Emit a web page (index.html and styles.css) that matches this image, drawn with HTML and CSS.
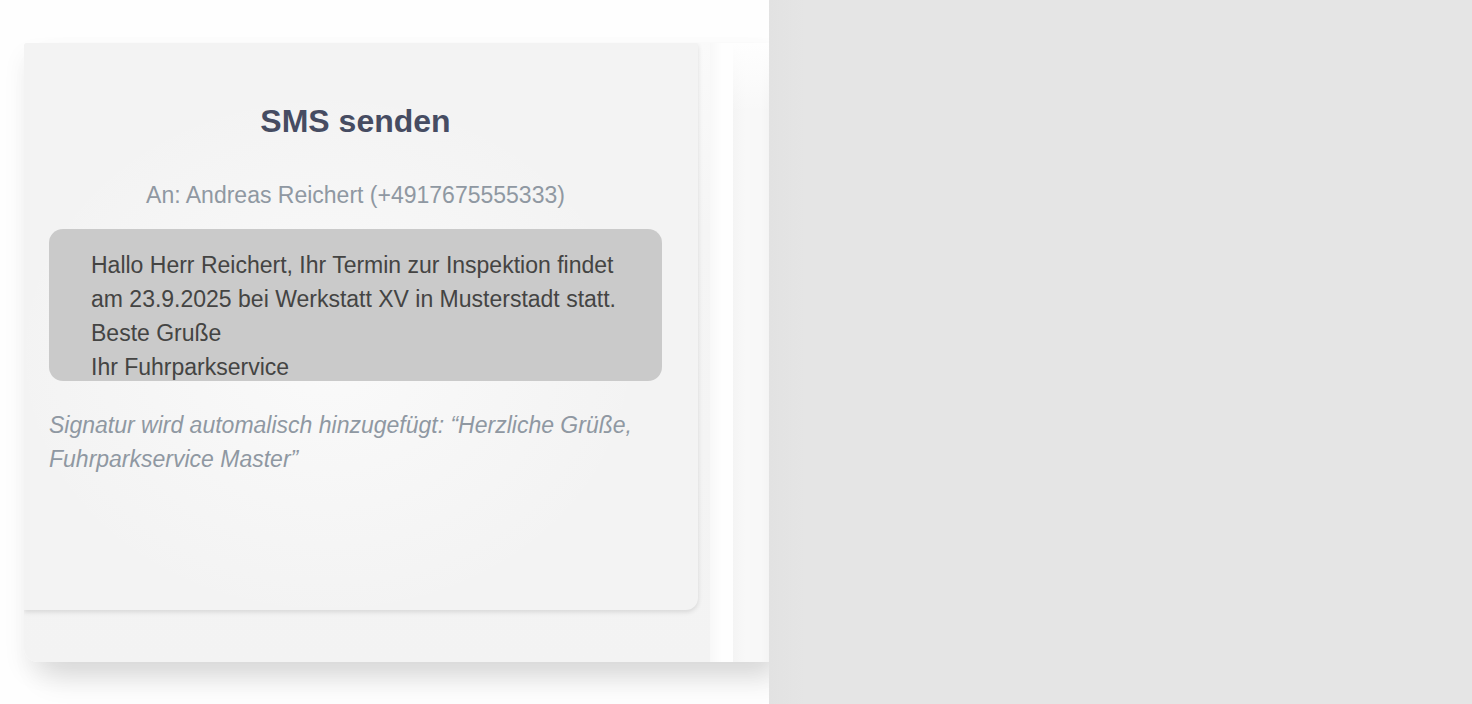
FILE: index.html
```html
<!DOCTYPE html>
<html lang="de">
<head>
<meta charset="utf-8">
<meta name="viewport" content="width=device-width, initial-scale=1">
<title>SMS senden</title>
<link rel="stylesheet" href="styles.css">
</head>
<body>
<div class="layout">
  <main class="stage">
    <div class="panel">
      <div class="content">
        <form class="card">
          <h1 class="title">SMS senden</h1>
          <label class="recipient" for="message">An: Andreas Reichert (+4917675555333)</label>
          <textarea class="message" id="message">Hallo Herr Reichert, Ihr Termin zur Inspektion findet
am 23.9.2025 bei Werkstatt XV in Musterstadt statt.
Beste Gruße
Ihr Fuhrparkservice</textarea>
          <p class="signature">Signatur wird automalisch hinzugefügt: “Herzliche Grüße, Fuhrparkservice Master”</p>
        </form>
      </div>
      <div class="gutter"></div>
      <div class="edge"></div>
    </div>
  </main>
  <aside class="backdrop"></aside>
</div>
</body>
</html>
```

FILE: styles.css
```css
* {
  box-sizing: border-box;
}

body {
  margin: 0;
  background: #fefefe;
  font-family: "Liberation Sans", Arial, sans-serif;
}

.layout {
  display: grid;
  grid-template-columns: 769fr 703fr;
  min-height: 100vh;
}

.stage {
  display: flex;
  padding: 43px 0 42px 24px;
  overflow: hidden;
}

.panel {
  flex: 1;
  display: grid;
  grid-template-columns: 1fr 23px 36px;
  border-radius: 3px 0 0 14px;
  box-shadow:
    16px 18px 30px -2px rgba(0, 0, 0, 0.11),
    0 12px 24px rgba(0, 0, 0, 0.06);
  overflow: hidden;
  background: #fefefe;
}

.content {
  display: flex;
  flex-direction: column;
  padding: 0 12px 52px 0;
  background: linear-gradient(to bottom, #fafafa, #f5f5f5 30%, #f3f3f3);
}

.card {
  flex: 1;
  display: flex;
  flex-direction: column;
  padding: 57px 36px 56px 25px;
  border-radius: 3px 3px 12px 0;
  background:
    radial-gradient(ellipse at 45% 55%, #fafafa, rgba(250, 250, 250, 0) 60%),
    #f3f3f3;
  box-shadow: 0 2px 5px rgba(0, 0, 0, 0.12);
}

.title {
  margin: 0;
  color: #464c62;
  font-size: 32px;
  line-height: 42px;
  text-align: center;
}

.recipient {
  margin: 36px 0 17px;
  color: #8f98a2;
  font-size: 23px;
  line-height: 34px;
  text-align: center;
}

.message {
  width: 100%;
  height: 152px;
  padding: 19px 20px 0 42px;
  border: 0;
  border-radius: 14px;
  background: #cacaca;
  color: #444443;
  font: 23px/34px "Liberation Sans", Arial, sans-serif;
  overflow: hidden;
  resize: none;
}

.signature {
  margin: 27px 0 0;
  color: #8f98a2;
  font-size: 23px;
  font-style: italic;
  line-height: 34px;
}

.gutter {
  background: linear-gradient(to right, #f8f8f8, #fefefe 12px);
}

.edge {
  background:
    linear-gradient(to bottom, #fefefe, rgba(254, 254, 254, 0) 70px),
    linear-gradient(to right, #f4f4f4, #f8f8f8 12px, #f8f8f8 28px, #f4f4f4);
}

.backdrop {
  background: linear-gradient(to right, #e2e2e2, #e5e5e5 36px);
}
```
